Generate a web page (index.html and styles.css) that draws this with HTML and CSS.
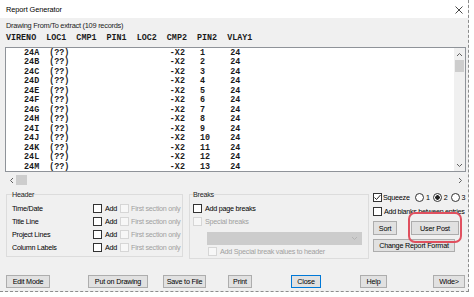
FILE: index.html
```html
<!DOCTYPE html>
<html lang="en">
<head>
    <meta charset="UTF-8">
    <title>Report Generator</title>
    <link rel="stylesheet" href="styles.css">
</head>
<body>
    <div class="window">
        <div class="titlebar">
            <span>Report Generator</span>
            <svg class="close" width="8" height="8" viewBox="0 0 8 8"><path d="M0.5 0.5 L7.5 7.5 M7.5 0.5 L0.5 7.5" stroke="#333" stroke-width="0.9" fill="none"/></svg>
        </div>
        <div class="body">
            <div class="caption">Drawing From/To extract (109 records)</div>
            <div class="cols">VIRENO  LOC1  CMP1  PIN1  LOC2  CMP2  PIN2  VLAY1</div>
            <div class="listbox">
<pre class="rows">   24A  (??)                    -X2   1     24
   24B  (??)                    -X2   2     24
   24C  (??)                    -X2   3     24
   24D  (??)                    -X2   4     24
   24E  (??)                    -X2   5     24
   24F  (??)                    -X2   6     24
   24G  (??)                    -X2   7     24
   24H  (??)                    -X2   8     24
   24I  (??)                    -X2   9     24
   24J  (??)                    -X2   10    24
   24K  (??)                    -X2   11    24
   24L  (??)                    -X2   12    24
   24M  (??)                    -X2   13    24</pre>
                <div class="vscroll">
                    <svg width="7" height="5" viewBox="0 0 7 5"><path d="M1 4 L3.5 1.5 L6 4" stroke="#606060" fill="none"/></svg>
                    <div class="vthumb"></div>
                    <div class="fill"></div>
                    <svg width="7" height="5" viewBox="0 0 7 5"><path d="M1 1 L3.5 3.5 L6 1" stroke="#606060" fill="none"/></svg>
                </div>
            </div>
            <div class="hscroll">
                <svg width="5" height="7" viewBox="0 0 5 7"><path d="M4 1 L1.5 3.5 L4 6" stroke="#606060" fill="none"/></svg>
                <div class="hthumb"></div>
                <div class="fill"></div>
                <svg width="5" height="7" viewBox="0 0 5 7"><path d="M1 1 L3.5 3.5 L1 6" stroke="#606060" fill="none"/></svg>
            </div>

            <div class="options">
                <fieldset class="group header-group">
                    <legend>Header</legend>
                    <div class="hrow"><span class="lbl">Time/Date</span><span class="cb"></span><span class="add">Add</span><span class="cb off"></span><span class="dim">First section only</span></div>
                    <div class="hrow"><span class="lbl">Title Line</span><span class="cb"></span><span class="add">Add</span><span class="cb off"></span><span class="dim">First section only</span></div>
                    <div class="hrow"><span class="lbl">Project Lines</span><span class="cb"></span><span class="add">Add</span><span class="cb off"></span><span class="dim">First section only</span></div>
                    <div class="hrow"><span class="lbl">Column Labels</span><span class="cb"></span><span class="add">Add</span><span class="cb off"></span><span class="dim">First section only</span></div>
                </fieldset>

                <fieldset class="group breaks-group">
                    <legend>Breaks</legend>
                    <div class="brow"><span class="cb"></span><span>Add page breaks</span></div>
                    <div class="brow"><span class="cb off"></span><span class="dim">Special breaks</span></div>
                    <div class="combo">
                        <svg width="7" height="5" viewBox="0 0 7 5"><path d="M1 1 L3.5 3.5 L6 1" stroke="#b4b4b4" fill="none"/></svg>
                    </div>
                    <div class="brow indent"><span class="cb off"></span><span class="dim">Add Special break values to header</span></div>
                </fieldset>

                <div class="side">
                    <div class="srow squeeze-row">
                        <span class="cb checked">
                            <svg width="9" height="9" viewBox="0 0 9 9"><path d="M1.5 4.5 L3.5 6.5 L7.5 2" stroke="#222" stroke-width="1" fill="none"/></svg>
                        </span>
                        <span class="squeeze">Squeeze</span>
                        <span class="radio"></span><span class="rl">1</span>
                        <span class="radio on"></span><span class="rl">2</span>
                        <span class="radio"></span><span class="rl">3</span>
                    </div>
                    <div class="srow blanks"><span class="cb"></span><span>Add blanks between entries</span></div>
                    <div class="btnrow">
                        <button class="btn sort">Sort</button>
                        <div class="post-wrap">
                            <button class="btn post">User Post</button>
                            <span class="highlight"></span>
                        </div>
                    </div>
                    <button class="btn format">Change Report Format</button>
                </div>
            </div>

            <div class="buttons">
                <button class="btn b-edit">Edit Mode</button>
                <button class="btn b-put">Put on Drawing</button>
                <button class="btn b-save">Save to File</button>
                <button class="btn b-print">Print</button>
                <button class="btn b-close">Close</button>
                <button class="btn b-help">Help</button>
                <button class="btn b-wide">Wide&gt;</button>
            </div>
        </div>
    </div>
</body>
</html>
```

FILE: styles.css
```css
body {
    margin: 0;
    background-color: #ffffff;
    font-family: "Liberation Sans", Arial, sans-serif;
    font-size: 7.2px;
    letter-spacing: -0.25px;
    color: #000;
}

.window {
    width: 468px;
    height: 291px;
    background-color: #f0f0f0;
    border-right: 1px dashed #8c8c8c;
    border-bottom: 1px dashed #8c8c8c;
    overflow: hidden;
}

.titlebar {
    height: 18px;
    background-color: #ffffff;
    display: flex;
    align-items: center;
    justify-content: space-between;
    padding: 0 5px 0 6px;
    font-size: 7.4px;
    letter-spacing: -0.1px;
}

.close {
    margin-top: 2px;
}

.body {
    padding: 2px 0 0 5px;
}

.caption {
    height: 11px;
    line-height: 11px;
    padding-left: 1px;
    color: #222;
    font-size: 7.4px;
}

.cols {
    margin-top: 3px;
    height: 9px;
    line-height: 9px;
    padding-left: 1px;
    white-space: pre;
    font-family: "Liberation Mono", monospace;
    font-weight: bold;
    font-size: 8.4px;
    letter-spacing: 0;
    color: #1a1a1a;
}

.listbox {
    margin-top: 4px;
    width: 459px;
    height: 123px;
    border: 1px solid #8f9399;
    background-color: #ffffff;
    display: flex;
}

.rows {
    flex: 1;
    margin: 0;
    padding: 0.5px 0 0 3px;
    font-family: "Liberation Mono", monospace;
    font-weight: bold;
    font-size: 8.4px;
    letter-spacing: 0;
    line-height: 9.5px;
    color: #1a1a1a;
}

.vscroll {
    width: 11px;
    background-color: #f0f0f0;
    display: flex;
    flex-direction: column;
    align-items: center;
    padding: 4px 0 3px;
}

.vthumb {
    margin-top: 3px;
    width: 9px;
    height: 12px;
    background-color: #cdcdcd;
}

.fill {
    flex: 1;
}

.hscroll {
    margin-top: 1px;
    width: 461px;
    height: 14px;
    display: flex;
    align-items: center;
    padding: 0 3px 0 4px;
    box-sizing: border-box;
}

.hthumb {
    margin-left: 2px;
    width: 11px;
    height: 10px;
    background-color: #cdcdcd;
}

.options {
    display: flex;
    align-items: flex-start;
    height: 86px;
    margin-top: 2px;
    white-space: nowrap;
}

.group {
    flex-shrink: 0;
    min-width: 0;
    margin: 0;
    border: 1px solid #dcdcdc;
    padding: 2px 0 0 5px;
    box-sizing: border-box;
}

.group legend {
    padding: 0;
    margin-left: 0;
    line-height: 11px;
    color: #222;
}

.header-group {
    margin-left: 1px;
    width: 177px;
    height: 68px;
}

.breaks-group {
    margin-left: 6px;
    width: 180px;
    height: 70px;
    padding-left: 3px;
}

.hrow {
    display: flex;
    align-items: center;
    height: 13px;
}

.lbl {
    width: 81px;
    flex-shrink: 0;
}

.cb {
    width: 9px;
    height: 9px;
    box-sizing: border-box;
    border: 1px solid #333;
    background-color: #fff;
    display: inline-block;
    flex-shrink: 0;
}

.cb.off {
    border-color: #d6d6d6;
    background-color: #f7f7f7;
}

.cb.checked svg {
    display: block;
    margin: -1px;
}

.add {
    margin-left: 3px;
    width: 15px;
    flex-shrink: 0;
}

.hrow .cb.off {
    margin-right: 2px;
}

.dim {
    color: #a0a0a0;
}

.brow {
    display: flex;
    align-items: center;
    height: 13px;
    gap: 3px;
}

.brow.indent {
    margin-left: 15px;
}

.combo {
    margin: 4px 0 0 14px;
    width: 155px;
    height: 13px;
    background-color: #cccccc;
    display: flex;
    align-items: center;
    justify-content: flex-end;
    padding-right: 4px;
    box-sizing: border-box;
}

.side {
    flex-shrink: 0;
    margin-left: 4px;
    width: 94px;
    display: flex;
    flex-direction: column;
    align-items: flex-start;
}

.srow {
    display: flex;
    align-items: center;
    height: 10px;
}

.squeeze-row {
    margin-top: 3px;
}

.srow.blanks {
    margin-top: 4px;
    gap: 2px;
    letter-spacing: -0.3px;
}

.squeeze {
    margin-left: 1px;
    width: 32px;
}

.radio {
    width: 9px;
    height: 9px;
    box-sizing: border-box;
    border: 1px solid #333;
    border-radius: 50%;
    background-color: #fff;
    flex-shrink: 0;
}

.radio.on {
    background: radial-gradient(circle, #222 0 2px, #fff 2.5px);
}

.rl {
    margin: 0 3px 0 2px;
}

.btn {
    font-family: "Liberation Sans", Arial, sans-serif;
    font-size: 7.2px;
    letter-spacing: -0.2px;
    color: #000;
    background-color: #e1e1e1;
    border: 1px solid #adadad;
    height: 13px;
    padding: 0;
    display: block;
    white-space: nowrap;
}

.btnrow {
    display: flex;
    margin-top: 5px;
    height: 14px;
}

.sort {
    width: 24px;
    height: 14px;
}

.post-wrap {
    position: relative;
    margin-left: 14px;
}

.post {
    width: 48px;
    height: 14px;
}

.highlight {
    position: absolute;
    left: -3px;
    top: -9px;
    width: 54px;
    height: 31px;
    box-sizing: border-box;
    border: 2px solid #e0505f;
    border-radius: 7px;
    filter: blur(0.3px);
}

.format {
    margin-top: 4px;
    width: 82px;
}

.buttons {
    display: flex;
    height: 13px;
}

.buttons .btn {
    height: 13px;
}

.b-edit { margin-left: 1px; width: 44px; }
.b-put { margin-left: 38px; width: 60px; }
.b-save { margin-left: 15px; width: 43px; }
.b-print { margin-left: 22px; width: 24px; }
.b-close { margin-left: 39px; width: 30px; border-color: #0078d7; }
.b-help { margin-left: 39px; width: 27px; }
.b-wide { margin-left: 46px; width: 32px; }
```
